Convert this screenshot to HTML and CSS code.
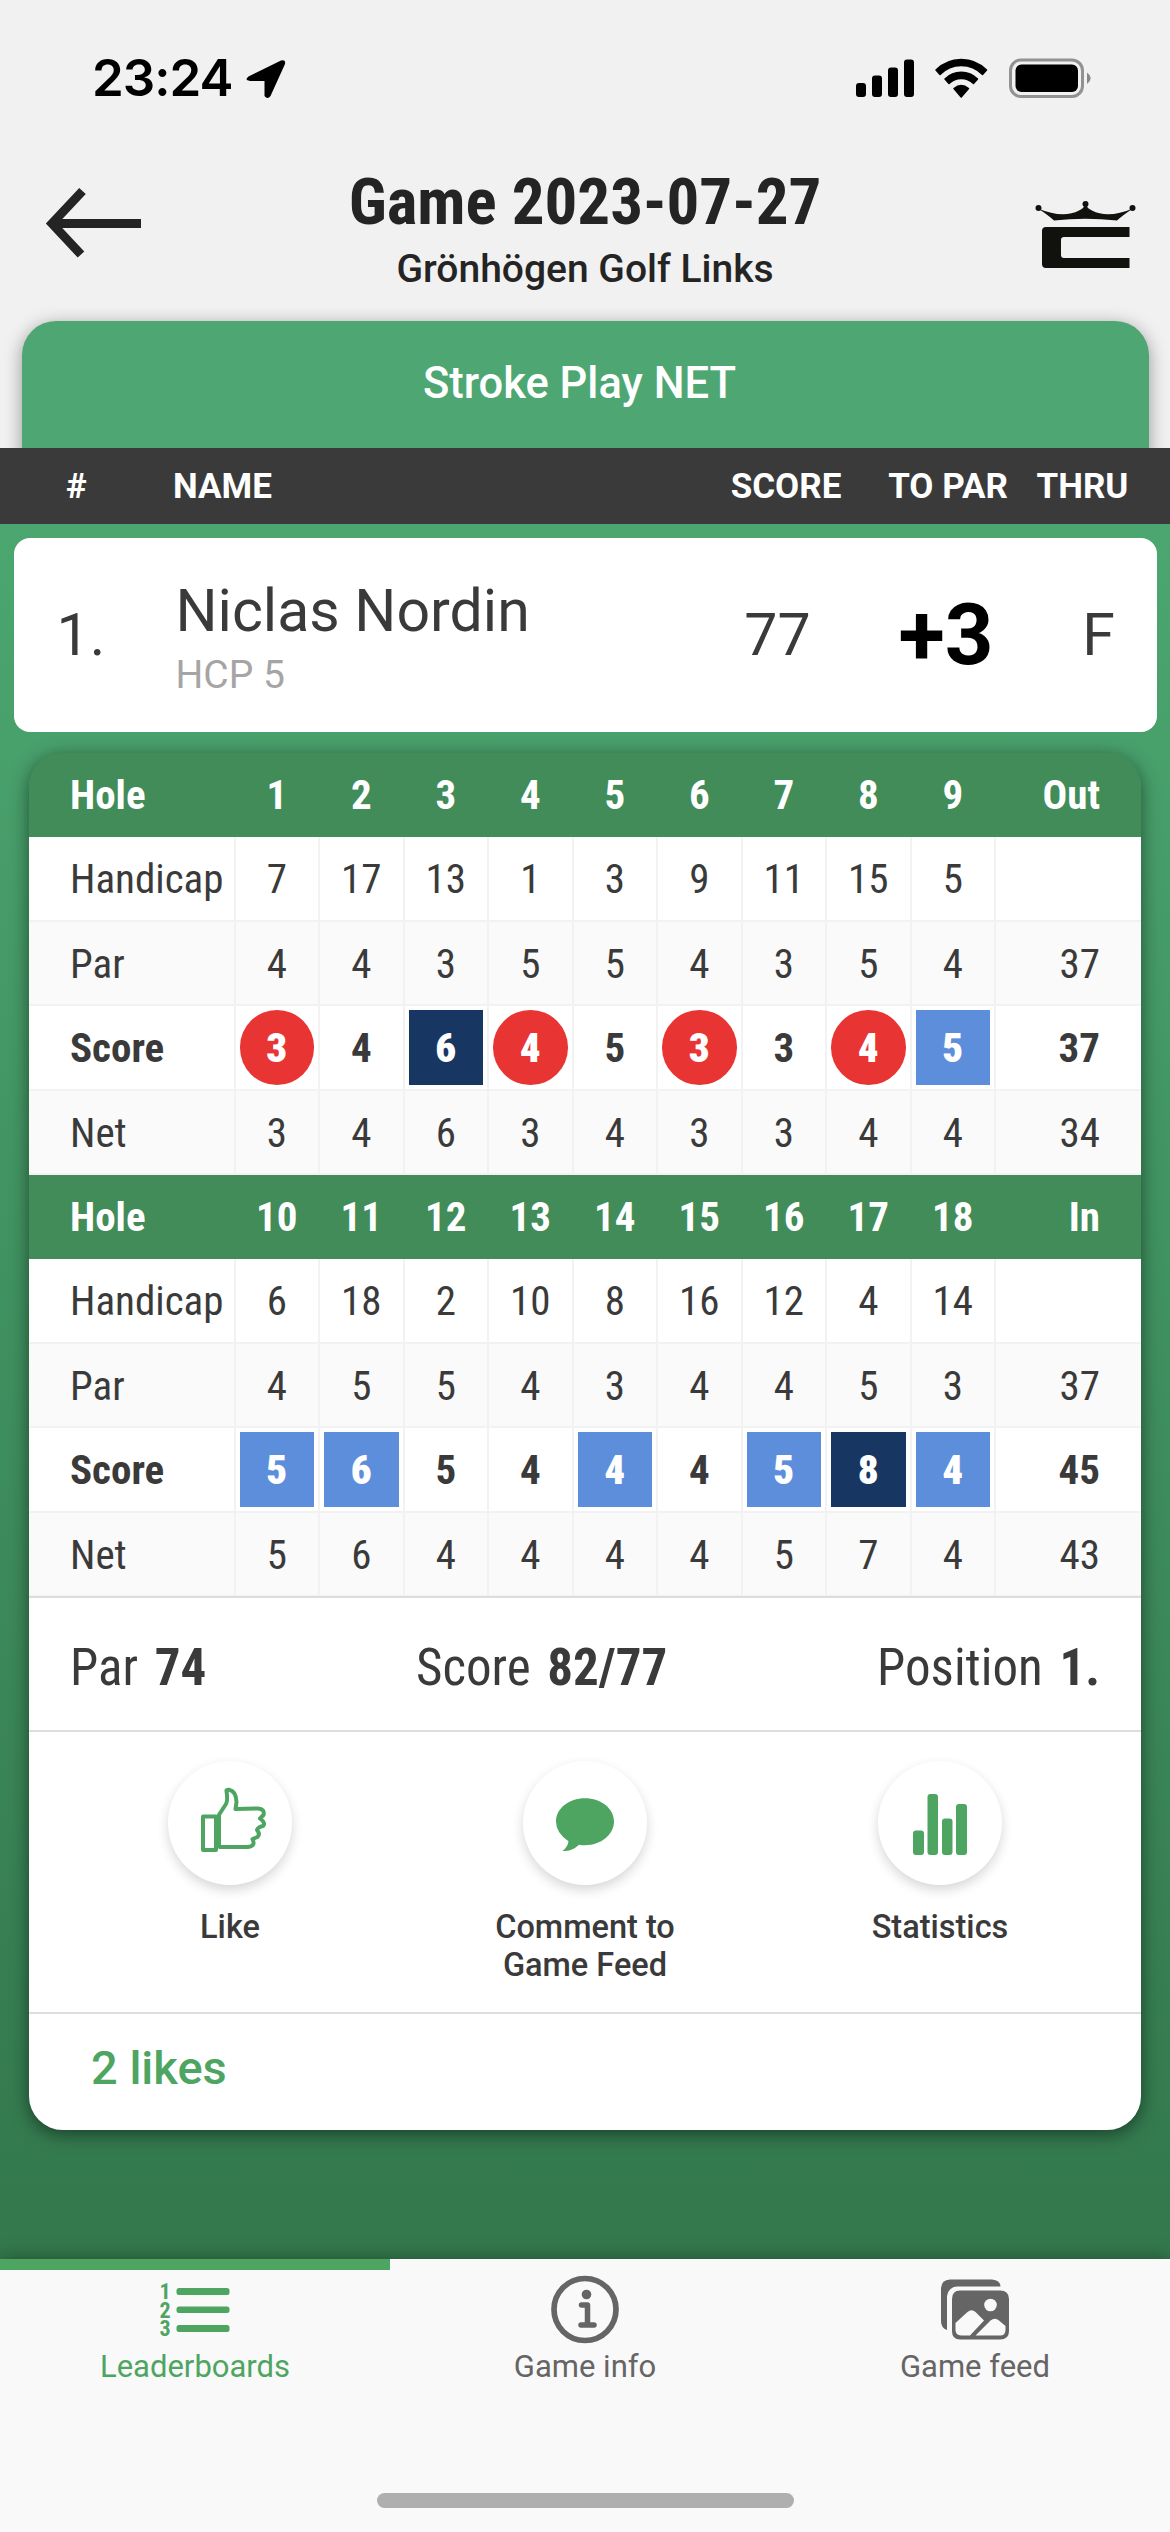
FILE: index.html
```html
<!DOCTYPE html>
<html lang="en">
<head>
<meta charset="utf-8">
<title>Game 2023-07-27</title>
<link rel="stylesheet" href="styles.css">
</head>
<body>
<div class="app">
  <div class="status">
    <span class="clock">23:24</span>
    <svg class="locate" width="42" height="42" viewBox="0 0 42 42"><path d="M3.500 18.500L36 2.500Q41 1 40 6L25.500 38Q22.500 42 19.500 38V23H5Q-1 22 3.500 18.500Z"/></svg>
    <svg class="indicators" width="240" height="42" viewBox="0 0 240 42">
      <rect x="0" y="25" width="10" height="14" rx="3"/><rect x="16" y="17.500" width="10" height="21.500" rx="3"/><rect x="32" y="9.500" width="10" height="29.500" rx="3"/><rect x="48" y="1.500" width="10" height="37.500" rx="3"/>
      <path d="M80 12A35.500 35.500 0 0 1 130.500 12L126.500 16.500A29.500 29.500 0 0 0 84 16.500ZM89 21A23 23 0 0 1 121.500 21L117.500 25.500A17.500 17.500 0 0 0 93 25.500ZM98 30.500Q105.200 24.500 112.500 30.500L105.200 39Z" stroke="#000" stroke-width="1.500" stroke-linejoin="round"/>
      <rect x="154.500" y="2" width="72" height="36.500" rx="10.500" fill="none" stroke="#929292" stroke-width="3"/><rect x="159.500" y="6.500" width="62.500" height="27.500" rx="6"/><path fill="#888" d="M231 14.500Q238.500 20 231 26Z"/>
    </svg>
  </div>
  <header class="header">
    <svg class="back" width="100" height="72" viewBox="0 0 100 72"><path d="M98 37.500H10M39.500 5L9 37.500 38 68.500" fill="none" stroke="#242424" stroke-width="9"/></svg>
    <div class="heading"><h1>Game 2023-07-27</h1><p>Grönhögen Golf Links</p></div>
    <svg class="brand" width="102" height="70" viewBox="0 0 102 70"><g fill="#11110d"><circle cx="3.500" cy="8" r="3"/><circle cx="50.500" cy="4" r="3"/><circle cx="97.500" cy="8" r="3"/><path d="M3 8.500Q28 19 44 10.500Q49 8.500 50 4H51Q52 8.500 57 10.500Q73 19 98 8.500Q88 15 82 20.500Q50 17 19 20.500Q13 15 3 8.500Z"/><path d="M11 27H94.500V37H29Q26 37 26 40V55Q26 58 29 58H94.500V68H11Q7 68 7 64V31Q7 27 11 27Z"/></g></svg>
  </header>
  <div class="tabs"><div class="tab">Stroke Play NET</div></div>
  <div class="columns"><span class="c-rank">#</span><span class="c-name">NAME</span><span class="c-score">SCORE</span><span class="c-par">TO PAR</span><span class="c-thru">THRU</span></div>
  <main class="board">
    <section class="player">
      <span class="p-rank">1.</span>
      <div class="p-name"><strong>Niclas Nordin</strong><small>HCP 5</small></div>
      <span class="p-score">77</span><span class="p-par">+3</span><span class="p-thru">F</span>
    </section>
    <section class="card">
      <div class="row head"><span>Hole</span><span>1</span><span>2</span><span>3</span><span>4</span><span>5</span><span>6</span><span>7</span><span>8</span><span>9</span><span>Out</span></div>
      <div class="row"><span>Handicap</span><span>7</span><span>17</span><span>13</span><span>1</span><span>3</span><span>9</span><span>11</span><span>15</span><span>5</span><span></span></div>
      <div class="row alt"><span>Par</span><span>4</span><span>4</span><span>3</span><span>5</span><span>5</span><span>4</span><span>3</span><span>5</span><span>4</span><span>37</span></div>
      <div class="row score"><span>Score</span><span><b class="birdie">3</b></span><span>4</span><span><b class="double">6</b></span><span><b class="birdie">4</b></span><span>5</span><span><b class="birdie">3</b></span><span>3</span><span><b class="birdie">4</b></span><span><b class="bogey">5</b></span><span>37</span></div>
      <div class="row alt"><span>Net</span><span>3</span><span>4</span><span>6</span><span>3</span><span>4</span><span>3</span><span>3</span><span>4</span><span>4</span><span>34</span></div>
      <div class="row head"><span>Hole</span><span>10</span><span>11</span><span>12</span><span>13</span><span>14</span><span>15</span><span>16</span><span>17</span><span>18</span><span>In</span></div>
      <div class="row"><span>Handicap</span><span>6</span><span>18</span><span>2</span><span>10</span><span>8</span><span>16</span><span>12</span><span>4</span><span>14</span><span></span></div>
      <div class="row alt"><span>Par</span><span>4</span><span>5</span><span>5</span><span>4</span><span>3</span><span>4</span><span>4</span><span>5</span><span>3</span><span>37</span></div>
      <div class="row score"><span>Score</span><span><b class="bogey">5</b></span><span><b class="bogey">6</b></span><span>5</span><span>4</span><span><b class="bogey">4</b></span><span>4</span><span><b class="bogey">5</b></span><span><b class="double">8</b></span><span><b class="bogey">4</b></span><span>45</span></div>
      <div class="row alt"><span>Net</span><span>5</span><span>6</span><span>4</span><span>4</span><span>4</span><span>4</span><span>5</span><span>7</span><span>4</span><span>43</span></div>
      <div class="summary"><span>Par <b>74</b></span><span>Score <b>82/77</b></span><span>Position <b>1.</b></span></div>
      <div class="actions">
        <div class="action"><i><svg width="90" height="90" viewBox="-5 2 90 90" fill="none" stroke="#4ea562" stroke-width="4"><path d="M13 40.500H26V74H13Z" stroke-linejoin="round"/><path d="M28.500 72V39" stroke-width="5"/><path d="M28.500 39.500L36 28Q38 25 36.500 15Q36 13.500 39 13.800Q46 15 46.500 26L45.500 33L68 32.500Q75 33 73.500 39L70 42.500Q76 47 73 50Q68 51 67 54Q70.500 58 67.500 61L62.500 63Q66 70 58 71H28.500" stroke-linejoin="round"/></svg></i>Like</div>
        <div class="action"><i><svg width="90" height="90" viewBox="0 1 90 90" fill="#4ea562"><path d="M45 21.300C61 21.300 74 31.500 74 44.500S61 68.200 45 68.200Q42 68.200 39 67.700Q32 74.500 22.500 74Q28 69.500 28.500 64.200Q16 56 16 44.500C16 31.500 29 21.300 45 21.300Z"/></svg></i>Comment to<br>Game Feed</div>
        <div class="action"><i><svg width="90" height="90" viewBox="0 2 90 90" fill="#4ea562"><rect x="18" y="54.500" width="11" height="24.500" rx="3"/><rect x="32.500" y="18" width="10.500" height="61" rx="3"/><rect x="47" y="42.500" width="10.500" height="36.500" rx="3"/><rect x="61" y="28" width="11" height="51" rx="3"/></svg></i>Statistics</div>
      </div>
      <div class="likes">2 likes</div>
    </section>
  </main>
  <nav class="nav">
    <div class="item active">
      <svg width="80" height="72" viewBox="0 0 80 72"><g fill="#4ea562"><rect x="21.500" y="14" width="53" height="7" rx="2.500"/><rect x="21.500" y="32.500" width="53" height="6.500" rx="2.500"/><rect x="21.500" y="51" width="53" height="7" rx="2.500"/></g><g class="digits"><text x="4.500" y="25">1</text><text x="4.500" y="43.500">2</text><text x="4.500" y="61.500">3</text></g></svg>
      <span>Leaderboards</span>
    </div>
    <div class="item">
      <svg width="80" height="72" viewBox="0 0 80 72"><g fill="none" stroke="#656565"><circle cx="40" cy="35.500" r="31" stroke-width="5.700"/><path d="M36.500 31H42.500V51M36 51H49" stroke-width="5.500" stroke-linecap="round" stroke-linejoin="round"/></g><circle cx="41.500" cy="20.500" r="4.800" fill="#656565"/></svg>
      <span>Game info</span>
    </div>
    <div class="item">
      <svg width="80" height="72" viewBox="0 0 80 72"><path fill="#656565" d="M15 5.500H57Q65 6 65.500 12.500H22Q13.500 13 12 22V56Q6 54 6 47V15Q6 6 15 5.500Z"/><path fill="#656565" d="M25 16.500H65Q74 16.500 74 25V57Q74 65.500 65 65.500H25Q17 65.500 17 57V25Q17 16.500 25 16.500Z"/><g fill="#f9f9f9"><circle cx="55.500" cy="31" r="6.300"/><path d="M20.500 49L32.500 38Q36.500 34.500 40.500 38L49 46.500L35 61.500H26Q20.500 61 20.500 56Z"/><path d="M40.500 61.500L55.500 46.500Q60 43 64 46.500L70.500 52V56Q70.500 61.500 65 61.500Z"/></g></svg>
      <span>Game feed</span>
    </div>
    <div class="home"></div>
  </nav>
</div>
</body>
</html>
```
FILE: styles.css
```css
* { box-sizing: border-box; margin: 0; padding: 0; }
body { font-family: Roboto, sans-serif; color: #3a3a3a; }
.app { width: 1170px; height: 2532px; background: #f1f1f1; display: flex; flex-direction: column; overflow: hidden; }

.status { height: 130px; padding: 58px 74px 0 92px; display: flex; align-items: flex-start; }
.clock { width: 153px; font: 600 51px/42px Inter, sans-serif; color: #000; letter-spacing: -1px; margin-top: -1px; }
.indicators { margin-left: auto; }

.header { height: 191px; padding: 0 33px 0 43px; display: flex; justify-content: space-between; align-items: flex-start; }
.back { margin-top: 56px; }
.brand { margin-top: 70px; }
.heading { text-align: center; padding-top: 32px; margin-right: 8px; color: #242424; }
.heading h1 { font: 700 65px/80px "Roboto Condensed", sans-serif; }
.heading p { font-size: 39px; line-height: 54px; font-weight: 500; }

.tabs { height: 127px; padding: 0 21.500px; }
.tab { height: 170px; border-radius: 34px; background: #4ea772; color: #fff; font-size: 43.500px; font-weight: 500; line-height: 126px; text-align: center; padding-right: 11px; box-shadow: 0 4px 18px rgba(0, 0, 0, .38); }

.columns { height: 76px; flex: none; position: relative; background: #3a3a3a; color: #fff; font-size: 35px; font-weight: 700; line-height: 77px; display: flex; padding-right: 35px; }
.c-rank { width: 173px; padding-left: 66px; }
.c-name { flex: 1; }
.c-score, .p-score { width: 160px; text-align: center; }
.c-par { width: 164px; text-align: center; }
.c-thru { width: 105px; text-align: center; }

.board { height: 1735px; flex: none; padding: 13.500px 13.500px 0; background: linear-gradient(#4ba66f, #347a4f 94%, #34784d); }
.player { height: 194.500px; border-radius: 16px; background: #fff; display: flex; align-items: center; font-size: 59px; padding-right: 23px; }
.p-rank { width: 162px; padding-left: 43px; }
.p-name { flex: 1; display: flex; flex-direction: column; padding-top: 7px; }
.p-name strong { font-weight: 400; line-height: 70px; }
.p-name small { font-size: 39px; line-height: 50px; color: #a5a5a5; margin-top: 4px; }
.p-par { width: 177px; text-align: center; font-size: 85px; font-weight: 700; color: #000; }
.p-thru { width: 70px; margin-left: 29px; text-align: center; }

.card { margin: 21px 15.500px 0; height: 1377px; border-radius: 34px; background: linear-gradient(#418c58 60px, #fff 60px); overflow: hidden; display: flex; flex-direction: column; box-shadow: 0 4px 18px rgba(0, 0, 0, .5); }
.row { height: 84.400px; flex: none; display: grid; grid-template-columns: 204.500px repeat(9, 84.500px) 1fr; font: 400 41px/85px "Roboto Condensed", sans-serif; text-align: center; border-bottom: 2px solid #f2f2f2; }
.row span { border-left: 2px solid #f2f2f2; height: 84px; }
.row span:first-child { text-align: left; padding-left: 41px; border-left: 0; white-space: nowrap; }
.row span:last-child { text-align: right; padding-right: 41px; }
.alt { background: #fafafa; }
.head { background: #418c58; color: #fff; font-weight: 700; border-bottom-color: #418c58; }
.row.head span { border-color: transparent; }
.score { font-weight: 700; }
.score b { display: block; width: 74.500px; height: 74.500px; line-height: 76px; margin: 4px 4px 0; color: #fff; }
.birdie { background: #e83432; border-radius: 50%; }
.bogey { background: #5d8edb; }
.double { background: #173762; }

.summary { height: 136px; flex: none; border: solid #ddd; border-width: 2px 0; padding: 4px 41px 0 41px; display: flex; justify-content: space-between; font: 400 51px/132px "Roboto Condensed", sans-serif; margin-top: -1px; }
.summary b { margin-left: 5px; }
.actions { height: 282px; flex: none; border-bottom: 2px solid #ddd; padding: 29px 23.500px 0; display: grid; grid-template-columns: repeat(3, 1fr); }
.action { display: flex; flex-direction: column; align-items: center; text-align: center; font-size: 32.500px; font-weight: 500; line-height: 38px; }
.action i { width: 124px; height: 124px; margin-bottom: 23px; border-radius: 50%; background: #fff; box-shadow: 0 5px 12px rgba(0, 0, 0, .16); display: grid; place-items: center; }
.likes { padding-left: 62px; font-size: 47px; font-weight: 500; line-height: 108px; color: #4ea562; }

.nav { height: 273px; flex: none; position: relative; background: #f9f9f9; display: grid; grid-template-columns: repeat(3, 1fr); color: #656565; font-size: 31px; box-shadow: 0 0 18px rgba(0, 0, 0, .35); }
.item { display: flex; flex-direction: column; align-items: center; padding-top: 15px; line-height: 42px; }
.item svg { flex: none; }
.active { color: #4ea562; box-shadow: inset 0 11px #4ea562; }
.digits { font: 700 22px "Roboto Condensed", sans-serif; fill: #4ea562; }
.home { position: absolute; left: 377px; top: 234px; width: 417px; height: 15px; border-radius: 8px; background: #afafaf; }
```
